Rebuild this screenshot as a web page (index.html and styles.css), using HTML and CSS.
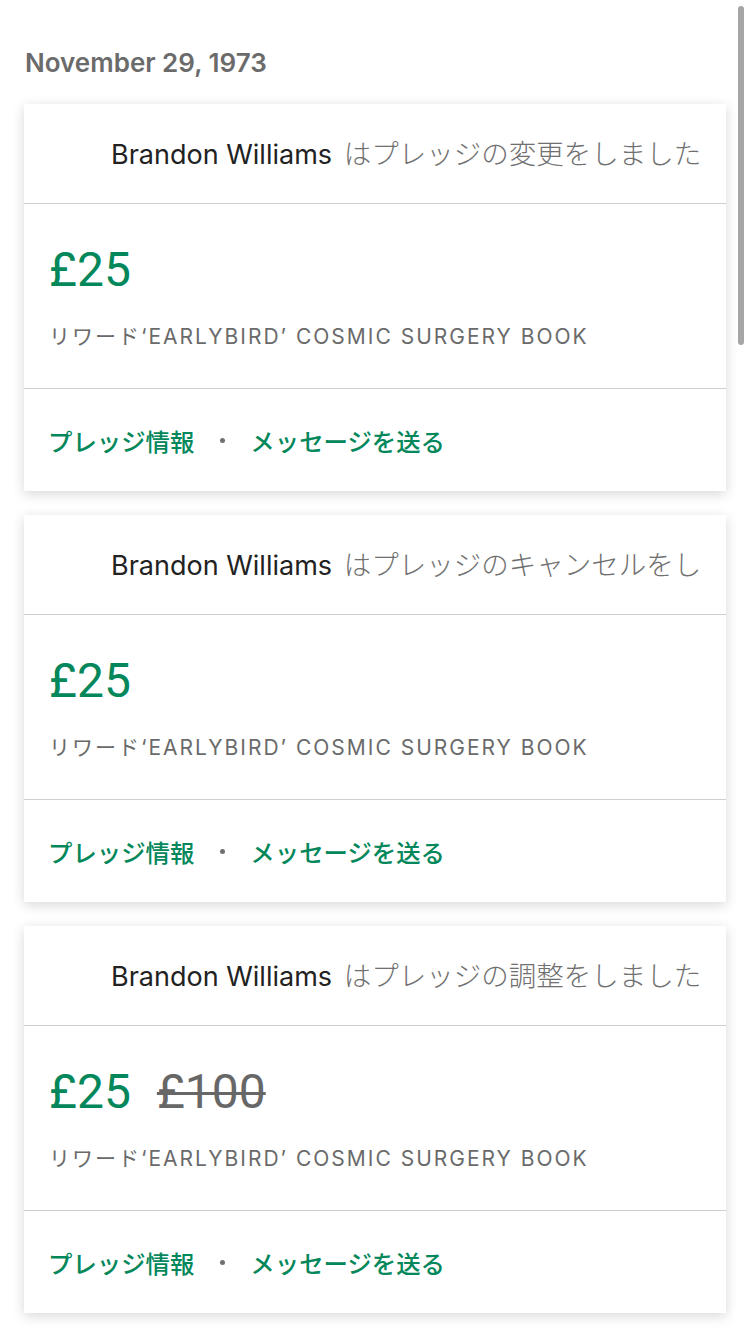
FILE: index.html
```html
<!DOCTYPE html>
<html lang="ja">
<head>
<meta charset="utf-8">
<title>Activity</title>
<link rel="stylesheet" href="styles.css">
</head>
<body>
<div class="page">
  <h2 class="date">November 29, 1973</h2>

  <div class="card">
    <div class="card-head"><div class="head-text"><span class="name">Brandon Williams</span> <span class="action">はプレッジの変更をしました</span></div></div>
    <div class="card-body">
      <div class="price"><span class="amount">£25</span></div>
      <div class="reward">リワード‘EARLYBIRD’ COSMIC SURGERY BOOK</div>
    </div>
    <div class="card-foot"><a class="link">プレッジ情報</a><span class="dot"></span><a class="link">メッセージを送る</a></div>
  </div>

  <div class="card">
    <div class="card-head"><div class="head-text"><span class="name">Brandon Williams</span> <span class="action">はプレッジのキャンセルをしました</span></div></div>
    <div class="card-body">
      <div class="price"><span class="amount">£25</span></div>
      <div class="reward">リワード‘EARLYBIRD’ COSMIC SURGERY BOOK</div>
    </div>
    <div class="card-foot"><a class="link">プレッジ情報</a><span class="dot"></span><a class="link">メッセージを送る</a></div>
  </div>

  <div class="card">
    <div class="card-head"><div class="head-text"><span class="name">Brandon Williams</span> <span class="action">はプレッジの調整をしました</span></div></div>
    <div class="card-body">
      <div class="price"><span class="amount">£25</span><span class="old">£100</span></div>
      <div class="reward">リワード‘EARLYBIRD’ COSMIC SURGERY BOOK</div>
    </div>
    <div class="card-foot"><a class="link">プレッジ情報</a><span class="dot"></span><a class="link">メッセージを送る</a></div>
  </div>
</div>
<div class="scrollbar"></div>
</body>
</html>
```

FILE: styles.css
```css
html, body {
  margin: 0;
  padding: 0;
  background: #ffffff;
}
body {
  font-family: Inter, "Noto Sans CJK JP", sans-serif;
  color: #222;
}
.page {
  padding: 45px 24px 20px 24px;
  display: flex;
  flex-direction: column;
  gap: 24px;
}
.date {
  margin: 0 0 -1px 1px;
  font-size: 26px;
  line-height: 36px;
  font-weight: 600;
  color: #6b6b6b;
}
.card {
  background: #fff;
  box-shadow: 0 3px 12px rgba(0, 0, 0, 0.16);
  display: flex;
  flex-direction: column;
}
.card-head {
  height: 100px;
  box-sizing: border-box;
  display: flex;
  align-items: center;
  padding: 0 24px 3px 87px;
  border-bottom: 1px solid #cfcfcf;
}
.head-text {
  flex: 1;
  min-width: 0;
  font-size: 27px;
  white-space: nowrap;
  overflow: hidden;
}
.head-text .name {
  color: #222;
}
.head-text .action {
  color: #707070;
  font-weight: 300;
  font-size: 27.5px;
  margin-left: 4px;
}
.card-body {
  padding: 38px 25px 36px 25px;
  border-bottom: 1px solid #cfcfcf;
}
.price {
  font-family: Roboto, sans-serif;
  font-size: 48px;
  line-height: 56px;
  height: 56px;
  display: flex;
  align-items: baseline;
}
.amount {
  color: #04875a;
}
.old {
  color: #676767;
  margin-left: 26px;
  text-decoration: line-through;
  text-decoration-thickness: 3px;
}
.reward {
  margin-top: 24px;
  font-size: 21px;
  letter-spacing: 2px;
  line-height: 30px;
  color: #6a6a6a;
  white-space: nowrap;
}
.card-foot {
  height: 102px;
  display: flex;
  align-items: center;
  padding: 0 24px;
}
.link {
  color: #04875a;
  font-size: 24.4px;
  font-weight: 500;
}
.dot {
  width: 5px;
  height: 5px;
  border-radius: 50%;
  background: #707070;
  margin: 0 25px 0 26px;
}
.scrollbar {
  position: fixed;
  top: 6px;
  left: 738px;
  width: 6px;
  height: 339px;
  border-radius: 3px;
  background: #a6a6a6;
}
```
